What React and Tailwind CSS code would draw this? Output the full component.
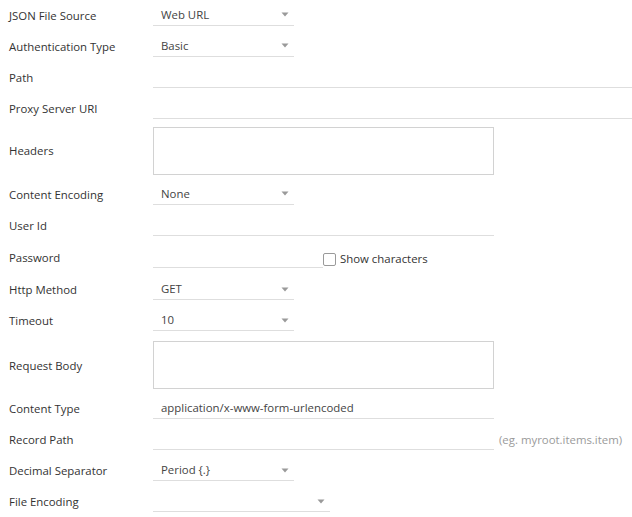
import React from 'react';

const font = { fontFamily: '"Open Sans", "Noto Sans", sans-serif' };

function Arrow() {
    return (
        <svg width="8" height="5" viewBox="0 0 8 5" className="shrink-0">
            <path d="M0.5 0.5 L7.5 0.5 L4 4.5 Z" fill="#9a9a9a" />
        </svg>
    );
}

// single-line row: label + field with bottom border
function Row({ label, children, className = 'h-[31px]' }) {
    return (
        <div className={`flex items-center ${className}`}>
            <div className="w-[153px] shrink-0 pl-[9px] text-[11.4px] leading-[21px] text-[#333]">{label}</div>
            {children}
        </div>
    );
}

function Select({ value, width = 'w-[141px]' }) {
    return (
        <div className={`${width} h-[21px] border-b border-[#dedede] flex items-center justify-between pl-[8px] pr-[5px]`}>
            <span className="text-[11.4px] leading-[20px] text-[#444]">{value}</span>
            <Arrow />
        </div>
    );
}

function Input({ value, width }) {
    return (
        <div className={`${width} h-[21px] border-b border-[#dedede] pl-[8px] text-[11.4px] leading-[20px] text-[#444]`}>
            {value}
        </div>
    );
}

function TextAreaRow({ label, className }) {
    return (
        <div className={`flex items-center ${className}`}>
            <div className="w-[153px] shrink-0 pl-[9px] text-[11.4px] leading-[21px] text-[#333]">{label}</div>
            <div className="w-[341px] h-[48px] border border-[#d2d2d2] bg-white" />
        </div>
    );
}

export default function App() {
    return (
        <div className="w-[632px] h-[517px] bg-white overflow-hidden flex flex-col" style={font}>
            <Row label="JSON File Source"><Select value="Web URL" /></Row>
            <Row label="Authentication Type"><Select value="Basic" /></Row>
            <Row label="Path"><Input value="" width="flex-1" /></Row>
            <Row label="Proxy Server URI"><Input value="" width="flex-1" /></Row>
            <TextAreaRow label="Headers" className="h-[55px] pb-[1px]" />
            <Row label="Content Encoding"><Select value="None" /></Row>
            <Row label="User Id"><Input value="" width="w-[341px]" /></Row>
            <Row label="Password" className="h-[34px] items-end pb-[6px]">
                <Input value="" width="w-[170px]" />
                <label className="flex items-center gap-[4px] mb-[1px]">
                    <span className="w-[13px] h-[13px] border border-[#9a9a9a] rounded-[2px] bg-white" />
                    <span className="text-[11.4px] leading-[16px] text-[#333]">Show characters</span>
                </label>
            </Row>
            <Row label="Http Method"><Select value="GET" /></Row>
            <Row label="Timeout"><Select value="10" /></Row>
            <TextAreaRow label="Request Body" className="h-[57px] pt-[1px]" />
            <Row label="Content Type"><Input value="application/x-www-form-urlencoded" width="w-[341px]" /></Row>
            <Row label="Record Path">
                <Input value="" width="w-[341px]" />
                <span className="ml-[5px] text-[11.4px] leading-[20px] text-[#9a9a9a]">(eg. myroot.items.item)</span>
            </Row>
            <Row label="Decimal Separator"><Select value="Period {.}" /></Row>
            <Row label="File Encoding"><Select value="" width="w-[177px]" /></Row>
        </div>
    );
}
